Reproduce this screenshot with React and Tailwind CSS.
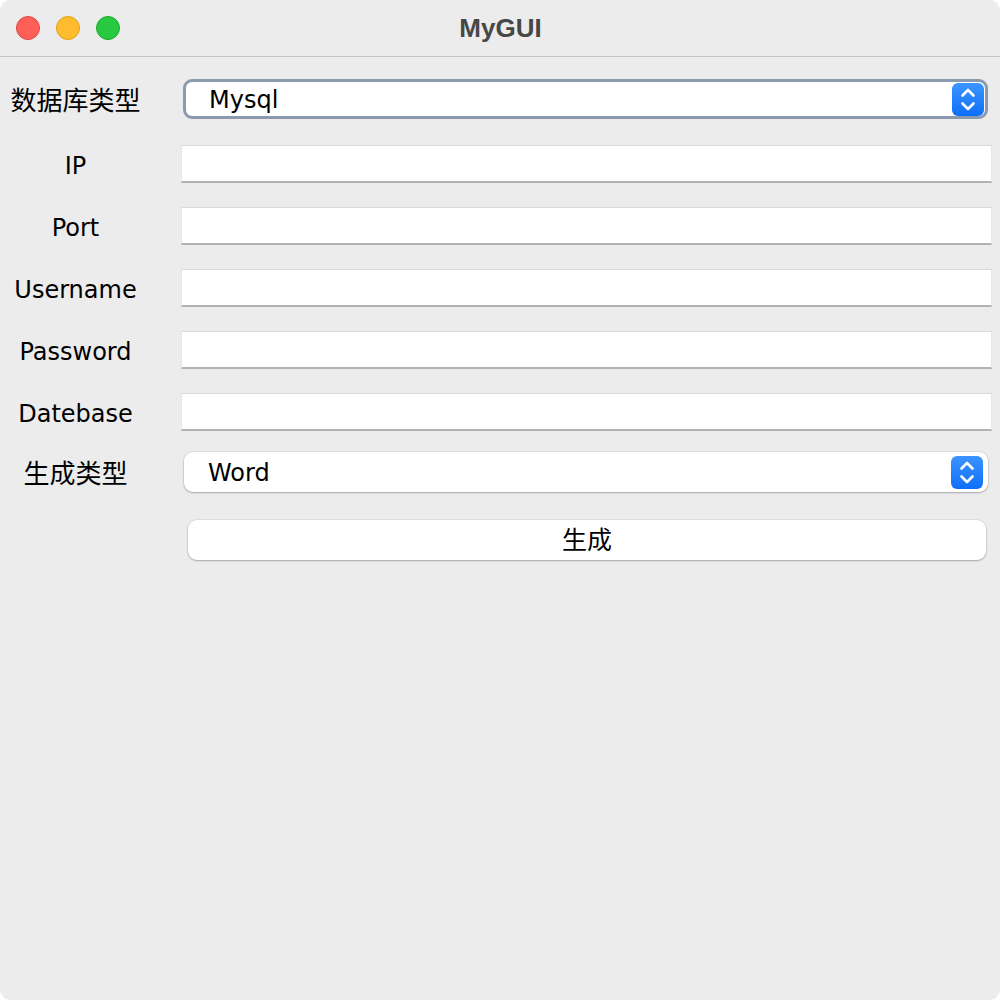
import React from "react";

const font = { fontFamily: '"DejaVu Sans", "Noto Sans CJK SC", sans-serif' };

function Stepper() {
  return (
    <div className="w-[32px] h-[33px] rounded-[6px] bg-gradient-to-b from-[#3b94ff] to-[#0b6ff7] flex items-center justify-center">
      <svg width="32" height="33" viewBox="0 0 32 33" fill="none">
        <path d="M10.5 12.5 L16 7 L21.5 12.5" stroke="white" strokeWidth="2.6" strokeLinecap="round" strokeLinejoin="round" />
        <path d="M10.5 20.5 L16 26 L21.5 20.5" stroke="white" strokeWidth="2.6" strokeLinecap="round" strokeLinejoin="round" />
      </svg>
    </div>
  );
}

function Label({ children, cjk }) {
  return (
    <div className={`w-[151px] shrink-0 text-center text-black leading-none pt-[4px] ${cjk ? "text-[26px]" : "text-[24px]"}`}>
      {children}
    </div>
  );
}

function Field() {
  return (
    <div className="ml-[30px] w-[811px] h-[38px] bg-white border-t border-t-[#d9d9d9] border-x border-x-[#e6e6e6] border-b-2 border-b-[#b3b3b3]" />
  );
}

export default function App() {
  return (
    <div className="w-[1000px] h-[1000px] bg-white" style={font}>
      <div className="w-full h-full rounded-[11px] bg-[#ececec] overflow-hidden flex flex-col">
        <div className="h-[57px] shrink-0 border-b border-[#c4c4c4] grid grid-cols-[1fr_auto_1fr] items-center bg-[#ececec]">
          <div className="flex items-center gap-[16px] pl-[16px]">
            <div className="w-[24px] h-[24px] rounded-full bg-[#fe5f57] border border-[#e2463f]" />
            <div className="w-[24px] h-[24px] rounded-full bg-[#febc2e] border border-[#e1a116]" />
            <div className="w-[24px] h-[24px] rounded-full bg-[#28c840] border border-[#1aab29]" />
          </div>
          <div
            className="text-[26px] font-bold text-[#474747] leading-none pl-[1px]"
            style={{ fontFamily: '"Liberation Sans", Arial, sans-serif' }}
          >
            MyGUI
          </div>
          <div />
        </div>

        <div className="flex flex-col pt-[22px]">
          <div className="flex items-center h-[40px]">
            <Label cjk>数据库类型</Label>
            <div className="ml-[32px] w-[805px] h-[40px] rounded-[9px] border-[3px] border-[#8c9ab0] bg-white flex items-center justify-between pl-[23px] pr-[1px]">
              <span className="text-[24px] text-black leading-none pt-[2px]">Mysql</span>
              <Stepper />
            </div>
          </div>

          <div className="flex items-center h-[38px] mt-[26px]">
            <Label>IP</Label>
            <Field />
          </div>
          <div className="flex items-center h-[38px] mt-[24px]">
            <Label>Port</Label>
            <Field />
          </div>
          <div className="flex items-center h-[38px] mt-[24px]">
            <Label>Username</Label>
            <Field />
          </div>
          <div className="flex items-center h-[38px] mt-[24px]">
            <Label>Password</Label>
            <Field />
          </div>
          <div className="flex items-center h-[38px] mt-[24px]">
            <Label>Datebase</Label>
            <Field />
          </div>

          <div className="flex items-center h-[40px] mt-[21px]">
            <Label cjk>生成类型</Label>
            <div className="ml-[33px] w-[804px] h-[40px] rounded-[9px] bg-white shadow-[0_0_0_1px_rgba(0,0,0,0.05),0_1px_2px_rgba(0,0,0,0.25)] flex items-center justify-between pl-[24px] pr-[5px]">
              <span className="text-[24px] text-black leading-none pt-[2px]">Word</span>
              <Stepper />
            </div>
          </div>

          <div className="flex items-center h-[40px] mt-[28px]">
            <div className="w-[188px] shrink-0" />
            <div className="w-[798px] h-[40px] rounded-[9px] bg-white shadow-[0_0_0_1px_rgba(0,0,0,0.05),0_1px_2px_rgba(0,0,0,0.25)] flex items-center justify-center">
              <span className="text-[25px] text-black leading-none">生成</span>
            </div>
          </div>
        </div>
      </div>
    </div>
  );
}
